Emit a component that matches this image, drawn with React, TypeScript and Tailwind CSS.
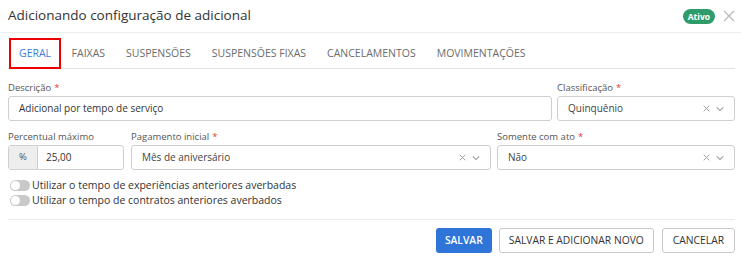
import React from "react";

function Req() {
  return <span className="text-[#e53935] ml-[3px]">*</span>;
}

function SelectIcons() {
  return (
    <div className="ml-auto flex items-center gap-[6px] text-[#999]">
      <svg width="7" height="7" viewBox="0 0 10 10" fill="none" stroke="currentColor" strokeWidth="1.3">
        <path d="M1 1l8 8M9 1l-8 8" />
      </svg>
      <svg width="8" height="6" viewBox="0 0 10 6" fill="none" stroke="currentColor" strokeWidth="1.3">
        <path d="M1 1l4 4 4-4" />
      </svg>
    </div>
  );
}

function Field({ label, required, children, className }: { label: string; required?: boolean; children: React.ReactNode; className?: string }) {
  return (
    <div className={"flex flex-col " + (className ?? "")}>
      <label className="text-[9.5px] text-[#555] h-[13px] leading-[13px] mb-[2px]">
        {label}
        {required && <Req />}
      </label>
      {children}
    </div>
  );
}

function Toggle({ label }: { label: string }) {
  return (
    <div className="flex items-center gap-[2px] h-[15px] pl-[2px]">
      <div className="w-[20px] h-[11px] rounded-full bg-[#c9c9c9] flex items-center px-[1px]">
        <div className="w-[9px] h-[9px] rounded-full bg-white" />
      </div>
      <span className="text-[10.5px] text-[#333]">{label}</span>
    </div>
  );
}

const tabs = ["GERAL", "FAIXAS", "SUSPENSÕES", "SUSPENSÕES FIXAS", "CANCELAMENTOS", "MOVIMENTAÇÕES"];

export default function App() {
  return (
    <div className="w-[741px] h-[261px] bg-white overflow-hidden" style={{ fontFamily: '"Open Sans", sans-serif' }}>
      <div className="flex items-center h-[33px] pl-[8px] pr-[6px] border-b border-[#ececec]">
        <h1 className="text-[13.5px] text-[#333] leading-none">Adicionando configuração de adicional</h1>
        <span className="ml-auto bg-[#2e9c6a] text-white text-[8.5px] font-bold rounded-full px-[5px] h-[15px] leading-[15px]">Ativo</span>
        <svg className="ml-[8px]" width="12" height="12" viewBox="0 0 12 12" fill="none" stroke="#bbb" strokeWidth="1.3">
          <path d="M1 1l10 10M11 1L1 11" />
        </svg>
      </div>

      <div className="ml-[8px] mr-[6px] flex h-[36px] border-b border-[#e2e2e2]">
        {tabs.map((t, i) => (
          <div
            key={t}
            className={
              "relative flex items-center pt-[6px] text-[10.5px] " +
              (i === 0 ? "text-[#3b7ddd] pl-[10px] pr-[10px] ml-[1px]" : "text-[#6b6b6b] px-[10.5px]")
            }
          >
            {t}
            {i === 0 && (
              <>
                <div className="absolute left-0 right-0 bottom-[-1px] h-[2px] bg-[#3b7ddd]" />
                <div className="absolute left-0 right-0 top-[5px] bottom-[-1px] border-[2.5px] border-[#ee0000]" />
              </>
            )}
          </div>
        ))}
      </div>

      <div className="pl-[8px] pr-[6px] pt-[12px]">
        <div className="flex gap-[5px]">
          <Field label="Descrição" required className="flex-1">
            <div className="h-[25px] border border-[#cfcfcf] rounded-[3px] flex items-center px-[10px] text-[10px] text-[#333]">
              Adicional por tempo de serviço
            </div>
          </Field>
          <Field label="Classificação" required className="w-[178px]">
            <div className="h-[25px] border border-[#cfcfcf] rounded-[3px] flex items-center pl-[10px] pr-[10px] text-[10px] text-[#444]">
              Quinquênio
              <SelectIcons />
            </div>
          </Field>
        </div>

        <div className="flex mt-[9px]">
          <Field label="Percentual máximo" className="w-[116px] mr-[7px]">
            <div className="h-[25px] border border-[#cfcfcf] rounded-[3px] flex text-[10px]">
              <div className="w-[29px] bg-[#eeeeee] border-r border-[#cfcfcf] flex items-center justify-center text-[#555] text-[9.5px]">%</div>
              <div className="flex items-center px-[8px] text-[#333]">25,00</div>
            </div>
          </Field>
          <Field label="Pagamento inicial" required className="w-[360px] mr-[6px]">
            <div className="h-[25px] border border-[#cfcfcf] rounded-[3px] flex items-center pl-[10px] pr-[10px] text-[10px] text-[#444]">
              Mês de aniversário
              <SelectIcons />
            </div>
          </Field>
          <Field label="Somente com ato" required className="flex-1">
            <div className="h-[25px] border border-[#cfcfcf] rounded-[3px] flex items-center pl-[10px] pr-[10px] text-[10px] text-[#444]">
              Não
              <SelectIcons />
            </div>
          </Field>
        </div>

        <div className="mt-[8px] flex flex-col">
          <Toggle label="Utilizar o tempo de experiências anteriores averbadas" />
          <Toggle label="Utilizar o tempo de contratos anteriores averbados" />
        </div>

        <div className="mt-[11px] border-t border-[#ececec] flex justify-end pt-[8px]">
          <button className="h-[25px] px-[9px] rounded-[3px] bg-[#2f74d9] text-white text-[10.3px] font-semibold mr-[7px]">SALVAR</button>
          <button className="h-[25px] px-[9px] rounded-[3px] border border-[#c8c8c8] bg-white text-[#333] text-[10.3px] mr-[8px]">SALVAR E ADICIONAR NOVO</button>
          <button className="h-[25px] px-[10px] rounded-[3px] border border-[#c8c8c8] bg-white text-[#333] text-[10.3px]">CANCELAR</button>
        </div>
      </div>
    </div>
  );
}
